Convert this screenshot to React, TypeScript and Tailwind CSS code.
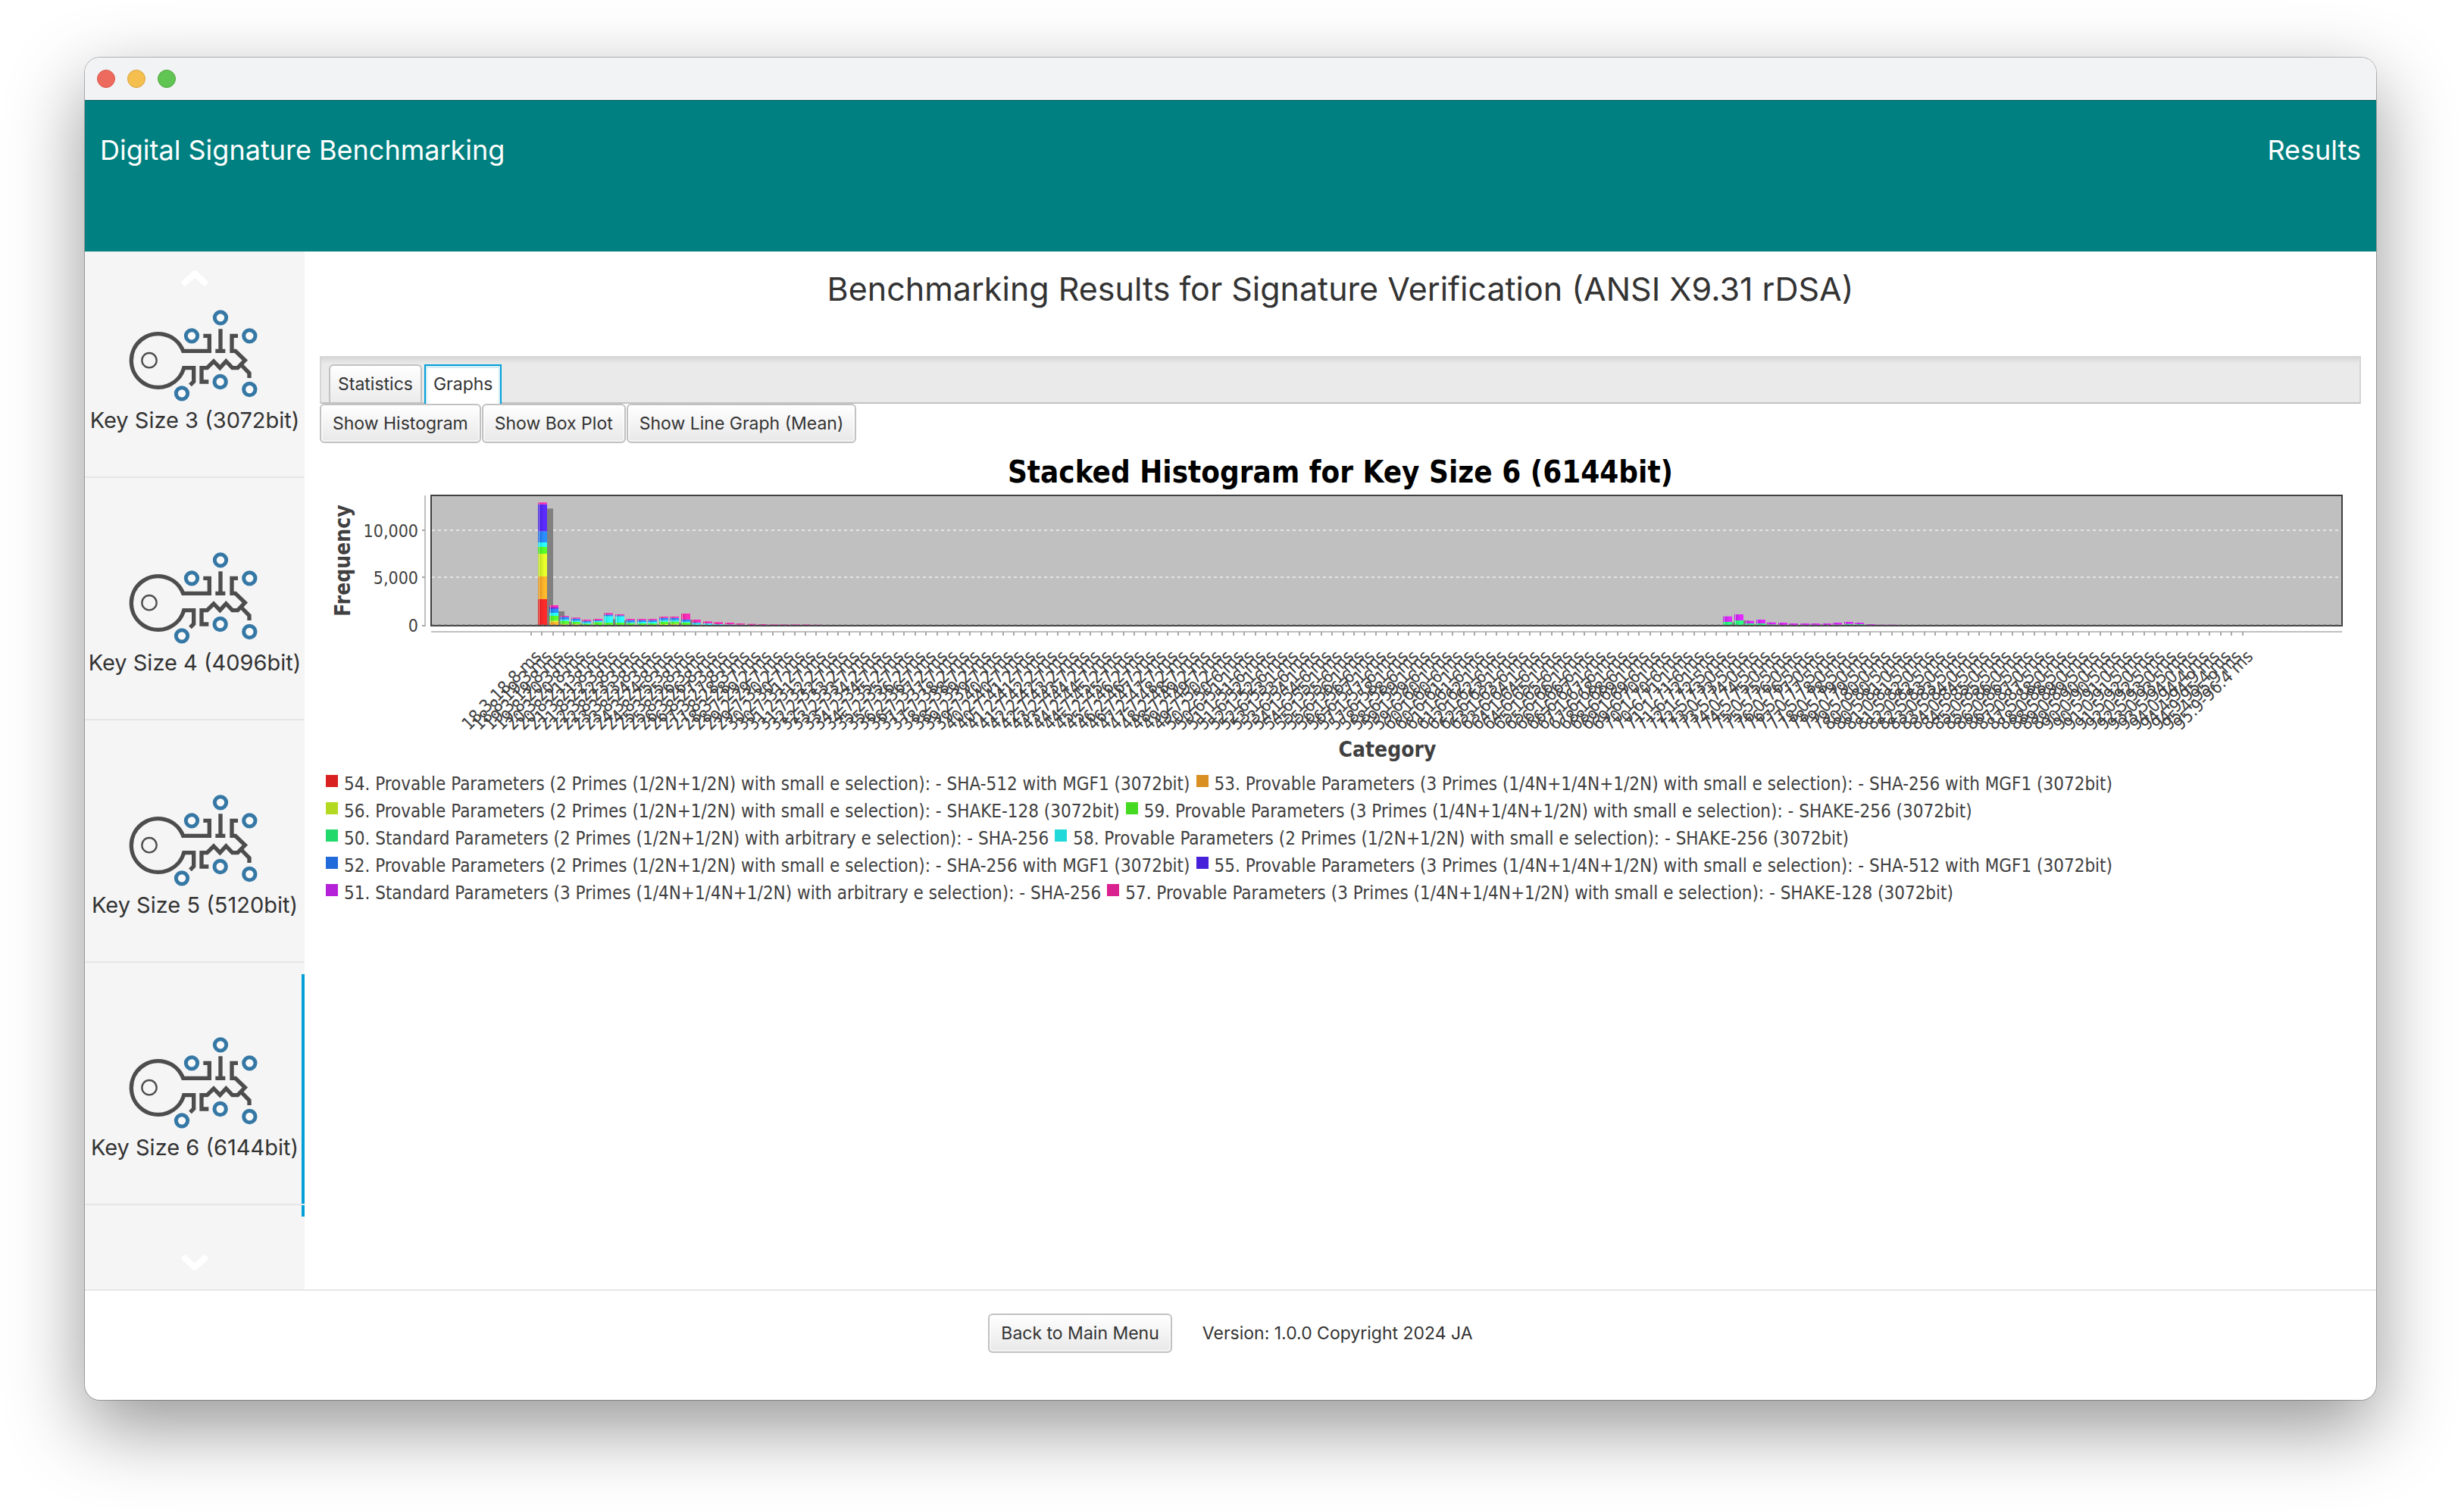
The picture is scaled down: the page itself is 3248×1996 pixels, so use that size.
import React, { useState } from 'react';

const CHART_FONT = "font-['DejaVu_Sans_Condensed','DejaVu_Sans',sans-serif]";

/* ---------- sidebar ---------- */

function KeyIcon() {
  return (
    <svg viewBox="0 0 525 363" className="h-[121px] w-[175px]" fill="none" aria-hidden="true">
      <g stroke="#4d4d4d" strokeWidth="16">
        <path d="M295 103H319V163H215A106 106 0 1 0 218 230H257V284L243 298" />
        <path d="M363 76V163M343 163H382" />
        <path d="M432 103H408V163H422L460 200L431 230H410L385 204L361 230L336 204L310 230H288V285H316" />
        <path d="M446 219L477 251V270" />
        <circle cx="81" cy="200" r="29" strokeWidth="7" />
      </g>
      <g stroke="#3578a5" strokeWidth="15" fill="#fafafa">
        <circle cx="249" cy="103" r="23" />
        <circle cx="363" cy="31" r="23" />
        <circle cx="478" cy="103" r="23" />
        <circle cx="362" cy="285" r="23" />
        <circle cx="478" cy="315" r="23" />
        <circle cx="210" cy="331" r="23" />
      </g>
    </svg>
  );
}

function Chevron({ d }: { d: string }) {
  return (
    <svg viewBox="0 0 34 22" className="h-[22px] w-[34px]" fill="none" aria-hidden="true">
      <path d={d} stroke="#ffffff" strokeWidth="8" strokeLinecap="round" strokeLinejoin="round" />
    </svg>
  );
}

const KEY_SIZES = [
  'Key Size 3 (3072bit)',
  'Key Size 4 (4096bit)',
  'Key Size 5 (5120bit)',
  'Key Size 6 (6144bit)',
];

function Sidebar() {
  const [selected, setSelected] = useState(3);
  return (
    <nav className="relative w-[290px] shrink-0 overflow-hidden bg-[#f5f5f5]">
      <ul className="-mt-[6px]">
        {KEY_SIZES.map((label, i) => (
          <li
            key={label}
            className={
              i === selected
                ? 'h-[320px] border-r-4 border-[#049fd6]'
                : 'h-[320px] border-r-4 border-transparent'
            }
          >
            <button
              type="button"
              onClick={() => setSelected(i)}
              className="flex h-[305px] w-[290px] flex-col items-center border-b-2 border-[#e6e6e6] pt-[83px] text-[29px] leading-[50px] text-[#333333]"
            >
              <KeyIcon />
              <span className="whitespace-nowrap">{label}</span>
            </button>
          </li>
        ))}
      </ul>
      <button type="button" aria-label="Scroll up" className="absolute inset-x-0 top-6 flex justify-center">
        <Chevron d="M4 17L17 5L30 17" />
      </button>
      <button type="button" aria-label="Scroll down" className="absolute inset-x-0 bottom-6 flex justify-center">
        <Chevron d="M4 5L17 17L30 5" />
      </button>
    </nav>
  );
}

/* ---------- chart ---------- */

type ColorKey = 'R' | 'O' | 'Y' | 'G' | 'S' | 'C' | 'B' | 'P' | 'M' | 'K';

const COLORS: Record<ColorKey, [string, string]> = {
  R: ['#d92121', '#ff2b2b'],
  O: ['#d98f21', '#ffb92b'],
  Y: ['#b4d921', '#eaff2b'],
  G: ['#46d921', '#58ff2b'],
  S: ['#21d96a', '#2bff85'],
  C: ['#21d9d9', '#2bffff'],
  B: ['#216ad9', '#2b90ff'],
  P: ['#4621d9', '#5c2bff'],
  M: ['#b421d9', '#e42bff'],
  K: ['#d9218f', '#ff2bbd'],
};

type Segment = [ColorKey, number];

/* Stacked segments per bin, bottom to top; 3 units are one pixel high. */
const BARS: Record<number, Segment[]> = {
  1: [['R', 105], ['O', 90], ['Y', 90], ['G', 27], ['C', 18], ['B', 44], ['P', 107], ['K', 7]],
  2: [['R', 3], ['O', 12], ['Y', 5], ['G', 19], ['C', 12], ['B', 16], ['P', 5], ['K', 9]],
  3: [['O', 5], ['Y', 2], ['G', 12], ['C', 6], ['B', 10], ['K', 4]],
  4: [['O', 5], ['Y', 2], ['G', 8], ['C', 5], ['B', 8], ['K', 4]],
  5: [['G', 8], ['C', 5], ['B', 6], ['K', 5]],
  6: [['G', 14], ['C', 4], ['B', 4], ['K', 5]],
  7: [['G', 12], ['C', 26], ['B', 6], ['K', 6]],
  8: [['G', 12], ['C', 25], ['B', 4], ['K', 4]],
  9: [['G', 10], ['C', 4], ['B', 8], ['K', 5]],
  10: [['G', 9], ['C', 6], ['B', 7], ['K', 5]],
  11: [['G', 9], ['C', 6], ['B', 7], ['K', 5]],
  12: [['O', 3], ['Y', 3], ['G', 10], ['C', 6], ['B', 9], ['K', 5]],
  13: [['O', 5], ['Y', 3], ['G', 8], ['C', 6], ['B', 9], ['K', 5]],
  14: [['Y', 3], ['G', 9], ['C', 4], ['B', 8], ['K', 24]],
  15: [['G', 4], ['C', 6], ['B', 3], ['K', 11]],
  16: [['G', 3], ['C', 6], ['K', 8]],
  17: [['C', 6], ['K', 8]],
  18: [['C', 5], ['K', 7]],
  19: [['C', 4], ['K', 5]],
  20: [['C', 2], ['K', 5]],
  21: [['K', 6]],
  22: [['K', 5]],
  23: [['K', 5]],
  24: [['K', 5]],
  25: [['K', 5]],
  26: [['K', 4]],
  109: [['S', 15], ['M', 22]],
  110: [['S', 21], ['M', 24]],
  111: [['S', 9], ['M', 10]],
  112: [['S', 9], ['M', 15]],
  113: [['S', 5], ['M', 8]],
  114: [['S', 3], ['M', 9]],
  115: [['S', 2], ['M', 7]],
  116: [['S', 3], ['M', 6]],
  117: [['S', 3], ['M', 6]],
  118: [['S', 3], ['M', 6]],
  119: [['S', 4], ['M', 8]],
  120: [['S', 7], ['M', 8]],
  121: [['S', 6], ['M', 6]],
  122: [['S', 2], ['M', 4]],
  123: [['M', 4]],
  124: [['M', 4]],
};

const BIN_COUNT = 157;
const BIN_START = 18.297;
const BIN_STEP = 0.49773;
const FIRST_TICK = 279;
const TICK_STEP = 14.48;
const BASE = 179;

const tickX = (i: number) => FIRST_TICK + i * TICK_STEP;
const binLabel = (i: number) =>
  `${(BIN_START + i * BIN_STEP).toFixed(1)}-${(BIN_START + (i + 1) * BIN_STEP).toFixed(1)} ms`;

function Bar({ bin, segments }: { bin: number; segments: Segment[] }) {
  const x = Math.round(tickX(bin) - 5);
  const total = segments.reduce((sum, s) => sum + s[1], 0) / 3;
  let top = BASE;
  return (
    <g>
      {total > 8 && <rect x={x + 12} y={BASE - total + 8} width={8} height={total - 8} fill="#808080" />}
      {segments.map(([key, units]) => {
        top -= units / 3;
        return <rect key={key} x={x} y={top} width={12} height={units / 3} fill={`url(#bar-${key})`} />;
      })}
      <rect x={x + 1} y={top} width={1} height={total} fill="#ffffff" opacity={0.5} />
    </g>
  );
}

function Histogram() {
  const bins = Array.from({ length: BIN_COUNT }, (_, i) => i);
  return (
    <svg viewBox="0 0 2694 364" className={`block h-auto w-full ${CHART_FONT}`} role="img" aria-label="Stacked histogram">
      <defs>
        {(Object.keys(COLORS) as ColorKey[]).map((key) => (
          <linearGradient key={key} id={`bar-${key}`}>
            <stop offset="0" stopColor={COLORS[key][0]} />
            <stop offset="0.7" stopColor={COLORS[key][1]} />
            <stop offset="1" stopColor={COLORS[key][1]} />
          </linearGradient>
        ))}
      </defs>

      <rect x="147" y="7" width="2522" height="172" fill="#c0c0c0" />
      <g stroke="#e4e4e4" strokeWidth="2" strokeDasharray="4 4">
        <path d="M148 53H2669" />
        <path d="M148 115H2669" />
      </g>
      {Object.entries(BARS).map(([bin, segments]) => (
        <Bar key={bin} bin={Number(bin)} segments={segments} />
      ))}
      <rect x="147" y="7" width="2522" height="172" fill="none" stroke="#404040" strokeWidth="2" />
      <path d="M148 178H2669" stroke="#707070" strokeWidth="1" strokeDasharray="4 4" />

      <g stroke="#c0c0c0" strokeWidth="2">
        <path d="M139 7V180" />
        <path d="M147 187H2669" />
      </g>
      <g stroke="#a8a8a8" strokeWidth="2">
        <path d="M135 53H139M135 115H139M135 179H139" />
        {bins.map((i) => (
          <path key={i} d={`M${Math.round(tickX(i))} 187V192`} />
        ))}
      </g>

      <g fill="#404040" className="text-[23px]" textAnchor="end">
        <text x="130" y="62">10,000</text>
        <text x="130" y="124">5,000</text>
        <text x="130" y="187">0</text>
        {bins.map((i) => (
          <text key={i} transform={`translate(${Math.round(tickX(i)) + 15} 221) rotate(-45)`}>
            {binLabel(i)}
          </text>
        ))}
      </g>

      <g fill="#404040" className="text-[28px] font-bold" textAnchor="middle">
        <text x="1409" y="352">Category</text>
        <text transform="translate(40 93) rotate(-90)">Frequency</text>
      </g>
    </svg>
  );
}

const LEGEND: [string, string][][] = [
  [
    ['bg-[#d92121]', '54. Provable Parameters (2 Primes (1/2N+1/2N) with small e selection): - SHA-512 with MGF1 (3072bit)'],
    ['bg-[#d98f21]', '53. Provable Parameters (3 Primes (1/4N+1/4N+1/2N) with small e selection): - SHA-256 with MGF1 (3072bit)'],
  ],
  [
    ['bg-[#b4d921]', '56. Provable Parameters (2 Primes (1/2N+1/2N) with small e selection): - SHAKE-128 (3072bit)'],
    ['bg-[#46d921]', '59. Provable Parameters (3 Primes (1/4N+1/4N+1/2N) with small e selection): - SHAKE-256 (3072bit)'],
  ],
  [
    ['bg-[#21d96a]', '50. Standard Parameters (2 Primes (1/2N+1/2N) with arbitrary e selection): - SHA-256'],
    ['bg-[#21d9d9]', '58. Provable Parameters (2 Primes (1/2N+1/2N) with small e selection): - SHAKE-256 (3072bit)'],
  ],
  [
    ['bg-[#216ad9]', '52. Provable Parameters (2 Primes (1/2N+1/2N) with small e selection): - SHA-256 with MGF1 (3072bit)'],
    ['bg-[#4621d9]', '55. Provable Parameters (3 Primes (1/4N+1/4N+1/2N) with small e selection): - SHA-512 with MGF1 (3072bit)'],
  ],
  [
    ['bg-[#b421d9]', '51. Standard Parameters (3 Primes (1/4N+1/4N+1/2N) with arbitrary e selection): - SHA-256'],
    ['bg-[#d9218f]', '57. Provable Parameters (3 Primes (1/4N+1/4N+1/2N) with small e selection): - SHAKE-128 (3072bit)'],
  ],
];

function Legend() {
  return (
    <div className={`mt-[6px] px-2 text-[24px] leading-[36px] text-[#404040] ${CHART_FONT}`}>
      {LEGEND.map((row) => (
        <ul key={row[0][1]} className="flex gap-2">
          {row.map(([color, text]) => (
            <li key={text} className="flex items-start gap-2 whitespace-nowrap">
              <span className={`mt-[6px] size-4 shrink-0 ${color}`} />
              {text}
            </li>
          ))}
        </ul>
      ))}
    </div>
  );
}

/* ---------- page ---------- */

function PushButton({ children }: { children: React.ReactNode }) {
  return (
    <button
      type="button"
      className="h-[52px] rounded-[6px] border-2 border-[#c2c2c2] bg-linear-to-b from-white to-[#e8e8e8] px-[15px] text-[23px] leading-[48px] whitespace-nowrap text-[#333333] shadow-[inset_0_0_0_2px_rgba(255,255,255,0.5)]"
    >
      {children}
    </button>
  );
}

function Results() {
  return (
    <main className="min-w-0 flex-1 px-5 pt-[19px]">
      <h1 className="text-center text-[43px] leading-[60px] text-[#333333]">
        Benchmarking Results for Signature Verification (ANSI X9.31 rDSA)
      </h1>

      <div
        role="tablist"
        className="mt-[59px] flex h-[63px] items-end gap-[3px] border-2 border-[#d6d6d6] border-b-[#c2c2c2] bg-[linear-gradient(to_bottom,#d8d8d8,#eaeaea_8px)] pl-[10px] text-[23px] leading-[48px] text-[#333333]"
      >
        <button
          type="button"
          role="tab"
          aria-selected="false"
          className="h-[50px] rounded-t-[6px] border-2 border-b-0 border-[#c2c2c2] bg-linear-to-b from-white to-[#ebebeb] px-[10px]"
        >
          Statistics
        </button>
        <button
          type="button"
          role="tab"
          aria-selected="true"
          className="-mb-[2px] h-[52px] border-2 border-b-0 border-[#049fd6] bg-white px-[10px] pb-[2px] shadow-[inset_0_3px_0_#d3eef7,inset_2px_0_0_#d3eef7,inset_-2px_0_0_#d3eef7]"
        >
          Graphs
        </button>
      </div>

      <div role="tabpanel">
        <div className="flex gap-px">
          <PushButton>Show Histogram</PushButton>
          <PushButton>Show Box Plot</PushButton>
          <PushButton>Show Line Graph (Mean)</PushButton>
        </div>
        <h2 className={`mt-[14px] text-center text-[40px] leading-[48px] font-bold text-black ${CHART_FONT}`}>
          Stacked Histogram for Key Size 6 (6144bit)
        </h2>
        <Histogram />
        <Legend />
      </div>
    </main>
  );
}

export default function App() {
  return (
    <div className="flex min-h-screen bg-white px-28 pt-[76px] pb-[148px] font-['Inter','Liberation_Sans',sans-serif]">
      <div className="flex min-w-0 flex-1 flex-col overflow-hidden rounded-[20px] bg-white shadow-[0_0_0_1px_rgba(0,0,0,0.25),0_36px_100px_rgba(0,0,0,0.42)]">
        <div className="flex h-14 items-center gap-4 bg-[#f2f3f5] px-4">
          <button type="button" aria-label="Close" className="size-6 rounded-full border border-[#d8584c] bg-[#ec6a5e]" />
          <button type="button" aria-label="Minimize" className="size-6 rounded-full border border-[#d9a33e] bg-[#f4bf4f]" />
          <button type="button" aria-label="Zoom" className="size-6 rounded-full border border-[#51a73f] bg-[#61c554]" />
        </div>

        <header className="flex h-[200px] items-start justify-between border-t border-[#045f5f] bg-[#008080] px-5 pt-[41px] text-[36px] leading-[48px] text-white">
          <span>Digital Signature Benchmarking</span>
          <span>Results</span>
        </header>

        <div className="flex flex-1">
          <Sidebar />
          <Results />
        </div>

        <footer className="flex h-[146px] items-start justify-center gap-10 border-t-2 border-[#e6e6e6] pt-[30px] text-[23px] leading-[52px] text-[#333333]">
          <PushButton>Back to Main Menu</PushButton>
          <span>Version: 1.0.0 Copyright 2024 JA</span>
        </footer>
      </div>
    </div>
  );
}
